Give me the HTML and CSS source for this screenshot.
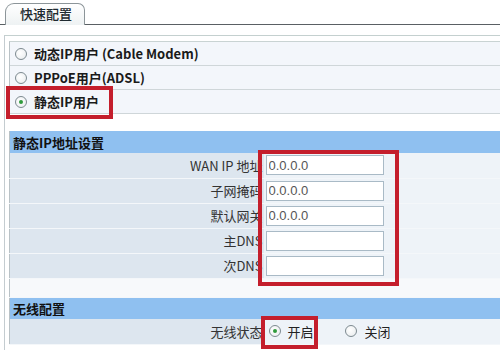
FILE: index.html
```html
<!DOCTYPE html>
<html lang="zh-CN">
  <head>
    <meta charset="UTF-8" />
    <title>快速配置</title>
    <link rel="stylesheet" href="styles.css">
  </head>
  <body>
    <div class="tabs">
      <div class="tab">快速配置</div>
    </div>
    <div class="panel">
      <div class="choices">
        <div class="choice"><span class="radio"></span>动态IP用户 (Cable Modem)</div>
        <div class="choice"><span class="radio"></span>PPPoE用户(ADSL)</div>
        <div class="choice"><span class="radio checked"></span>静态IP用户</div>
      </div>

      <table class="form">
        <tr class="head"><td colspan="2">静态IP地址设置</td></tr>
        <tr><td class="label">WAN IP 地址</td><td class="value"><input type="text" value="0.0.0.0"></td></tr>
        <tr><td class="label">子网掩码</td><td class="value"><input type="text" value="0.0.0.0"></td></tr>
        <tr><td class="label">默认网关</td><td class="value"><input type="text" value="0.0.0.0"></td></tr>
        <tr><td class="label">主DNS</td><td class="value"><input type="text"></td></tr>
        <tr><td class="label">次DNS</td><td class="value"><input type="text"></td></tr>
        <tr class="blank"><td colspan="2"></td></tr>
        <tr class="head"><td colspan="2">无线配置</td></tr>
        <tr>
          <td class="label">无线状态</td>
          <td class="value">
            <span class="opt"><span class="radio checked"></span>开启</span>
            <span class="opt"><span class="radio"></span>关闭</span>
          </td>
        </tr>
      </table>

      <!-- red highlight marks drawn over the form -->
      <div class="mark mark-static"></div>
      <div class="mark mark-inputs"></div>
      <div class="mark mark-wifi"></div>
    </div>
  </body>
</html>
```

FILE: styles.css
```css
* {
  box-sizing: border-box;
}
body {
  margin: 0;
  background: #ffffff;
  font-family: "Noto Sans CJK SC", "Liberation Sans", sans-serif;
  font-size: 13px;
  color: #222;
  width: 500px;
  height: 350px;
  overflow: hidden;
}
.tabs {
  height: 25px;
  padding: 3px 0 0 5px;
  display: flex;
  align-items: flex-end;
  border-bottom: 1px solid #5a6064;
}
.tab {
  width: 80px;
  height: 22px;
  margin-bottom: -1px;
  border: 1px solid #8c9599;
  border-bottom: none;
  border-radius: 9px 7px 0 0;
  background: linear-gradient(#ffffff, #eef2f3);
  padding-left: 14px;
  line-height: 20px;
  font-size: 13px;
  font-weight: 500;
  color: #1e2a30;
}
.panel {
  position: relative;
  margin: 10px 0 0 4px;
  border-top: 1px solid #c4d0cf;
  border-left: 1px solid #c4ccd0;
  padding: 5px 0 0 4px;
  height: 315px;
}
.choices {
  border-top: 1px solid #c9d3d3;
  border-left: 1px solid #b9c2c6;
}
.choice {
  height: 24px;
  background: #f3f6fb;
  border-bottom: 1px solid #cfd6d9;
  display: flex;
  align-items: center;
  padding-left: 5px;
  font-weight: bold;
  color: #1a1a1a;
}
.radio {
  display: inline-block;
  width: 12px;
  height: 12px;
  border: 1px solid #7d8a90;
  border-radius: 50%;
  background: radial-gradient(circle at 40% 40%, #ffffff, #e6eaec);
  margin-right: 7px;
  position: relative;
  flex-shrink: 0;
}
.radio.checked::after {
  content: "";
  position: absolute;
  left: 3px;
  top: 3px;
  width: 4px;
  height: 4px;
  border-radius: 50%;
  background: #2f9a3c;
}
.form {
  margin-top: 17px;
  width: 100%;
  border-collapse: collapse;
  border-left: 1px solid #b9c2c6;
}
.form td {
  padding: 0;
  height: 25px;
  border-bottom: 1px solid #f4f7fa;
}
.form .head td {
  height: 22px;
  background: #8fc0f0;
  font-weight: bold;
  color: #111;
  padding-left: 3px;
  border-bottom: none;
}
.form .blank td {
  height: 19px;
  background: #f7f9fb;
}
.label {
  width: 254px;
  text-align: right;
  padding-right: 1px !important;
  background: #dde6ef;
  color: #333;
}
.value {
  background: #eef3f8;
  padding-left: 2px !important;
}
.value input {
  display: block;
  width: 118px;
  height: 20px;
  border: 1px solid #a9bac6;
  background: #ffffff;
  padding: 0 2px;
  font-family: "Liberation Sans", sans-serif;
  font-size: 13px;
  color: #555;
}
.opt {
  display: inline-flex;
  align-items: center;
  margin-left: 3px;
  margin-right: 26px;
  color: #222;
}
.mark {
  position: absolute;
  border: 4px solid #c41e2c;
}
.mark-static {
  left: 1px;
  top: 50px;
  width: 107px;
  height: 33px;
}
.mark-inputs {
  left: 253px;
  top: 114px;
  width: 141px;
  height: 136px;
}
.mark-wifi {
  left: 256px;
  top: 280px;
  width: 57px;
  height: 33px;
}
```
